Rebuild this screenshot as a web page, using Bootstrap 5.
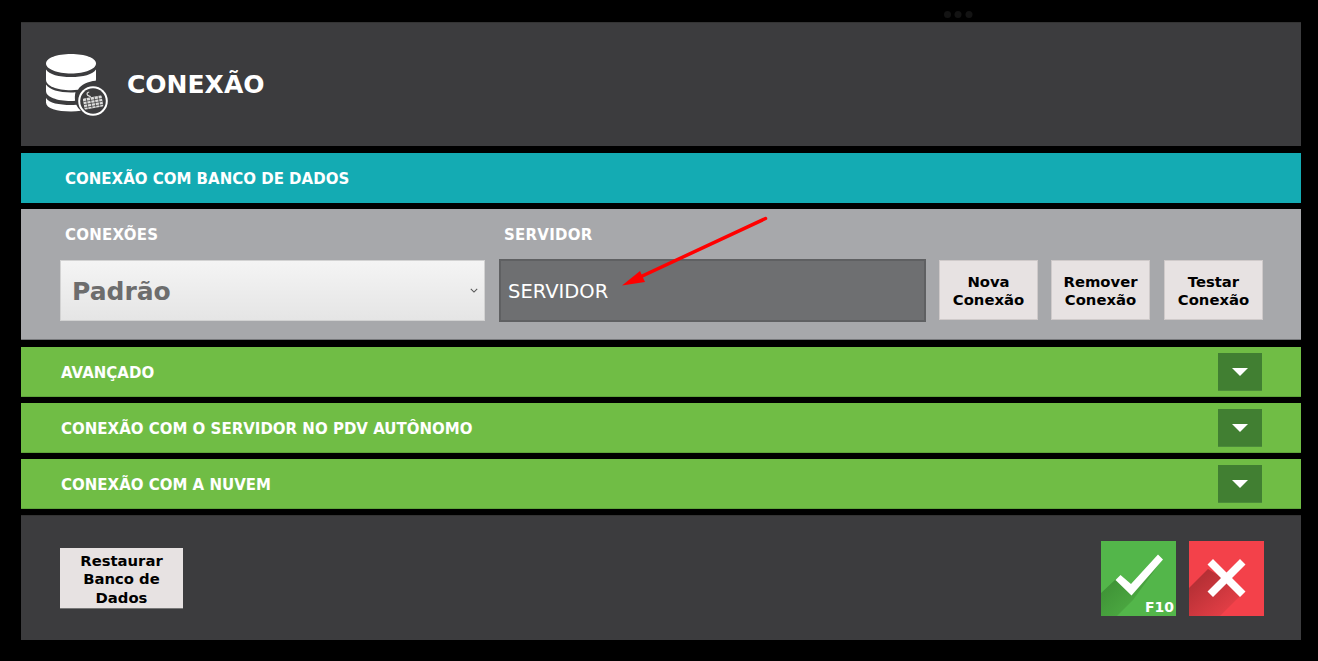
<!DOCTYPE html>
<html lang="pt">
<head>
<meta charset="utf-8">
<title>Conexão</title>
<link href="https://cdn.jsdelivr.net/npm/bootstrap@5.3.0/dist/css/bootstrap.min.css" rel="stylesheet">
<style>
html,body{height:100%;}
body{background:#000;font-family:"DejaVu Sans","Liberation Sans",sans-serif;overflow:hidden;}
.app-shell{position:relative;height:661px;padding:22px 17px 0 21px;display:flex;flex-direction:column;}
.top-dots{position:absolute;left:944px;top:11px;}
.band{flex:none;padding-left:40px;padding-right:39px;color:#fff;}
.band-head{height:124px;background:#3c3c3e;padding-left:25px;border-top:1px solid #333;}
.band-head h1{font-size:25px;font-weight:700;margin:0 0 0 19px;color:#fff;}
.band-teal{height:50px;margin-top:7px;background:#14abb3;padding-left:44px;padding-top:2px;font-weight:700;font-size:15px;}
.band-form{height:131px;margin-top:6px;background:#a7a8ab;padding-left:39px;padding-right:38px;border-bottom:1px solid #77787b;}
.field-label{font-weight:700;font-size:15px;line-height:17px;color:#fff;margin:0;letter-spacing:.25px;}
.labels{height:51px;padding-top:18px;}
.label-a{width:444px;padding-left:5px;}
.sel-box.form-select{width:425px;height:61px;border-radius:0;border:1px solid #d2d2d2;font-weight:700;font-size:25px;color:#6d6d6d;padding:2px 30px 0 11px;
 background-color:#eee;background-image:url("data:image/svg+xml,%3csvg xmlns='http://www.w3.org/2000/svg' viewBox='0 0 10 6'%3e%3cpath fill='none' stroke='%23555' stroke-width='1.3' d='M1 1l4 4 4-4'/%3e%3c/svg%3e"),linear-gradient(#f4f4f4,#e5e5e5);background-repeat:no-repeat;background-position:right 6px center,0 0;background-size:8px 5px,100% 100%;box-shadow:none;}
.srv-box.form-control{width:427px;height:63px;margin:-1px 0 -1px 14px;border-radius:0;border:2px solid #5f6062;background:#6e6f71;color:#fff;font-size:19.500px;padding:2px 7px 0;box-shadow:none;}
.act-btn.btn{width:99px;height:60px;flex:none;padding:2px 0 0;border-radius:0;border:1px solid #cfcaca;background:#e7e2e2;color:#000;font-weight:700;font-size:14.800px;line-height:18px;align-self:flex-start;--bs-btn-hover-bg:#e7e2e2;}
.act-btn.first{margin-left:13px;}
.act-btn.next{margin-left:13px;}
.act-btn.third{margin-left:14px;}
.band-green{height:50px;margin-top:6px;background:#70bd45;font-weight:700;font-size:15px;padding-right:39px;border-bottom:1px solid #5fa53b;}
.band-green.first-green{margin-top:7px;}
.green-label{padding-top:4px;}
.drop-btn{width:44px;height:38px;background:#417f32;border-bottom:1px solid #4c8c3a;margin-top:1px;}
.tri{width:0;height:0;border-left:8px solid transparent;border-right:8px solid transparent;border-top:8px solid #fff;}
.band-foot{height:125px;margin-top:6px;background:#3c3c3e;padding-left:39px;padding-right:37px;border-top:1px solid #333;}
.restore.btn{width:123px;height:61px;margin-top:1px;padding:3px 0 0;border-radius:0;border:0;border-bottom:1px solid #777;background:#e7e2e2;color:#000;font-weight:700;font-size:14.800px;line-height:18.500px;}
.sq{width:75px;height:75px;display:block;}
.sq-gap{margin-right:13px;}
.arrow-over{position:absolute;left:600px;top:205px;pointer-events:none;}
.f10-text{font-weight:700;font-size:14px;fill:#fff;}
</style>
</head>
<body>
<div class="app-shell">
  <svg class="top-dots" width="30" height="8" viewBox="0 0 30 8"><circle cx="3.5" cy="3.5" r="3.5" fill="#131313"/><circle cx="14" cy="3.5" r="3.5" fill="#131313"/><circle cx="25" cy="3.5" r="3.5" fill="#131313"/></svg>

  <header class="band band-head d-flex align-items-center">
    <svg width="62" height="62" viewBox="0 0 62 62" class="flex-none">
      <g fill="#fff">
        <path d="M0 9.500C0 4 11 0 25 0s25 4 25 9.500-11 10-25 10S0 15 0 9.500z"/>
        <path d="M0 15.500c3 5 13 7.500 25 7.500s22-2.500 25-7.500v9.500c0 .6-.1 1.200-.3 1.800-7.700.7-14.700 3.700-17.700 9-2.200.3-4.500.4-7 .4-14 0-25-4.200-25-10.500z"/>
        <path d="M0 30.500c3 5 13 8 25 8 1.500 0 3 0 4.500-.2-.7 2.700-.8 5.500-.4 8.500-1.300.1-2.700.2-4.100.2-14 0-25-4-25-10z"/>
        <path d="M0 44c3 5 13 7 25 7 1.800 0 3.500 0 5.300-.2 1 2.200 2.500 4.200 4.500 6-3 .5-6.300.7-9.800.7-14 0-25-3-25-9z"/>
      </g>
      <circle cx="47" cy="47" r="14.800" fill="#fff"/>
      <circle cx="47" cy="47" r="12.800" fill="#3c3c3e"/>
      <g transform="rotate(-10 47 48)">
        <rect x="37.500" y="43" width="19" height="11" rx="1" fill="#dcdcdc"/>
        <path d="M37.500 46h19M37.500 49h19M37.500 52h19M41 43v11M45 43v11M49 43v11M53 43v11" stroke="#3c3c3e" stroke-width=".7"/>
        <path d="M45.500 43c0-2-3-1.500-3-3.500s1.500-2 2.500-2" fill="none" stroke="#dcdcdc" stroke-width="1.100"/>
      </g>
    </svg>
    <h1>CONEXÃO</h1>
  </header>

  <section class="band band-teal d-flex align-items-center">CONEXÃO COM BANCO DE DADOS</section>

  <section class="band band-form">
    <div class="labels d-flex">
      <p class="field-label label-a">CONEXÕES</p>
      <p class="field-label">SERVIDOR</p>
    </div>
    <div class="d-flex align-items-center">
      <select class="form-select sel-box" aria-label="Conexões"><option>Padrão</option></select>
      <input class="form-control srv-box" type="text" value="SERVIDOR" aria-label="Servidor">
      <button class="btn act-btn first" type="button">Nova<br>Conexão</button>
      <button class="btn act-btn next" type="button">Remover<br>Conexão</button>
      <button class="btn act-btn third" type="button">Testar<br>Conexão</button>
    </div>
  </section>

  <section class="band band-green first-green d-flex align-items-center justify-content-between">
    <span class="green-label">AVANÇADO</span>
    <span class="drop-btn d-flex align-items-center justify-content-center"><span class="tri"></span></span>
  </section>
  <section class="band band-green d-flex align-items-center justify-content-between">
    <span class="green-label">CONEXÃO COM O SERVIDOR NO PDV AUTÔNOMO</span>
    <span class="drop-btn d-flex align-items-center justify-content-center"><span class="tri"></span></span>
  </section>
  <section class="band band-green d-flex align-items-center justify-content-between">
    <span class="green-label">CONEXÃO COM A NUVEM</span>
    <span class="drop-btn d-flex align-items-center justify-content-center"><span class="tri"></span></span>
  </section>

  <footer class="band band-foot d-flex align-items-center justify-content-between">
    <button class="btn restore" type="button">Restaurar<br>Banco de<br>Dados</button>
    <div class="d-flex">
      <svg class="sq sq-gap" viewBox="0 0 75 75" role="img" aria-label="Confirmar">
        <defs><linearGradient id="gs" x1="0" y1="0" x2="1" y2="1"><stop offset="0" stop-color="#37862f"/><stop offset="1" stop-color="#55b84a"/></linearGradient></defs>
        <rect width="75" height="75" fill="#53b64a"/>
        <path d="M15 38L0 52v23h16l16-16 29-40-33 32z" fill="url(#gs)"/>
        <path d="M14.500 39l5-5 10.500 9 27-29.500 5 5-31.500 36z" fill="#fff"/>
        <text class="f10-text" x="44" y="71">F10</text>
      </svg>
      <svg class="sq" viewBox="0 0 75 75" role="img" aria-label="Cancelar">
        <defs><linearGradient id="rs" x1="0" y1="0" x2="1" y2="1"><stop offset="0" stop-color="#a82b30"/><stop offset="1" stop-color="#f1434b"/></linearGradient></defs>
        <rect width="75" height="75" fill="#f3414a"/>
        <path d="M19 28L0 47v28h31l25-25z" fill="url(#rs)"/>
        <path d="M24 18l13.500 13.500L51 18l5.500 5.500L43 37l13.500 13.500L51 56 37.500 42.500 24 56l-5.500-5.500L32 37 18.500 23.500z" fill="#fff"/>
      </svg>
    </div>
  </footer>

  <svg class="arrow-over" width="180" height="90" viewBox="600 205 180 90" aria-hidden="true">
    <path d="M765.500 218.500L638 278" stroke="#f00" stroke-width="3.500" stroke-linecap="round" fill="none"/>
    <path d="M622 285.500l18-14.500 5 11z" fill="#f00"/>
  </svg>
</div>
<script src="https://cdn.jsdelivr.net/npm/bootstrap@5.3.0/dist/js/bootstrap.bundle.min.js"></script>
</body>
</html>
